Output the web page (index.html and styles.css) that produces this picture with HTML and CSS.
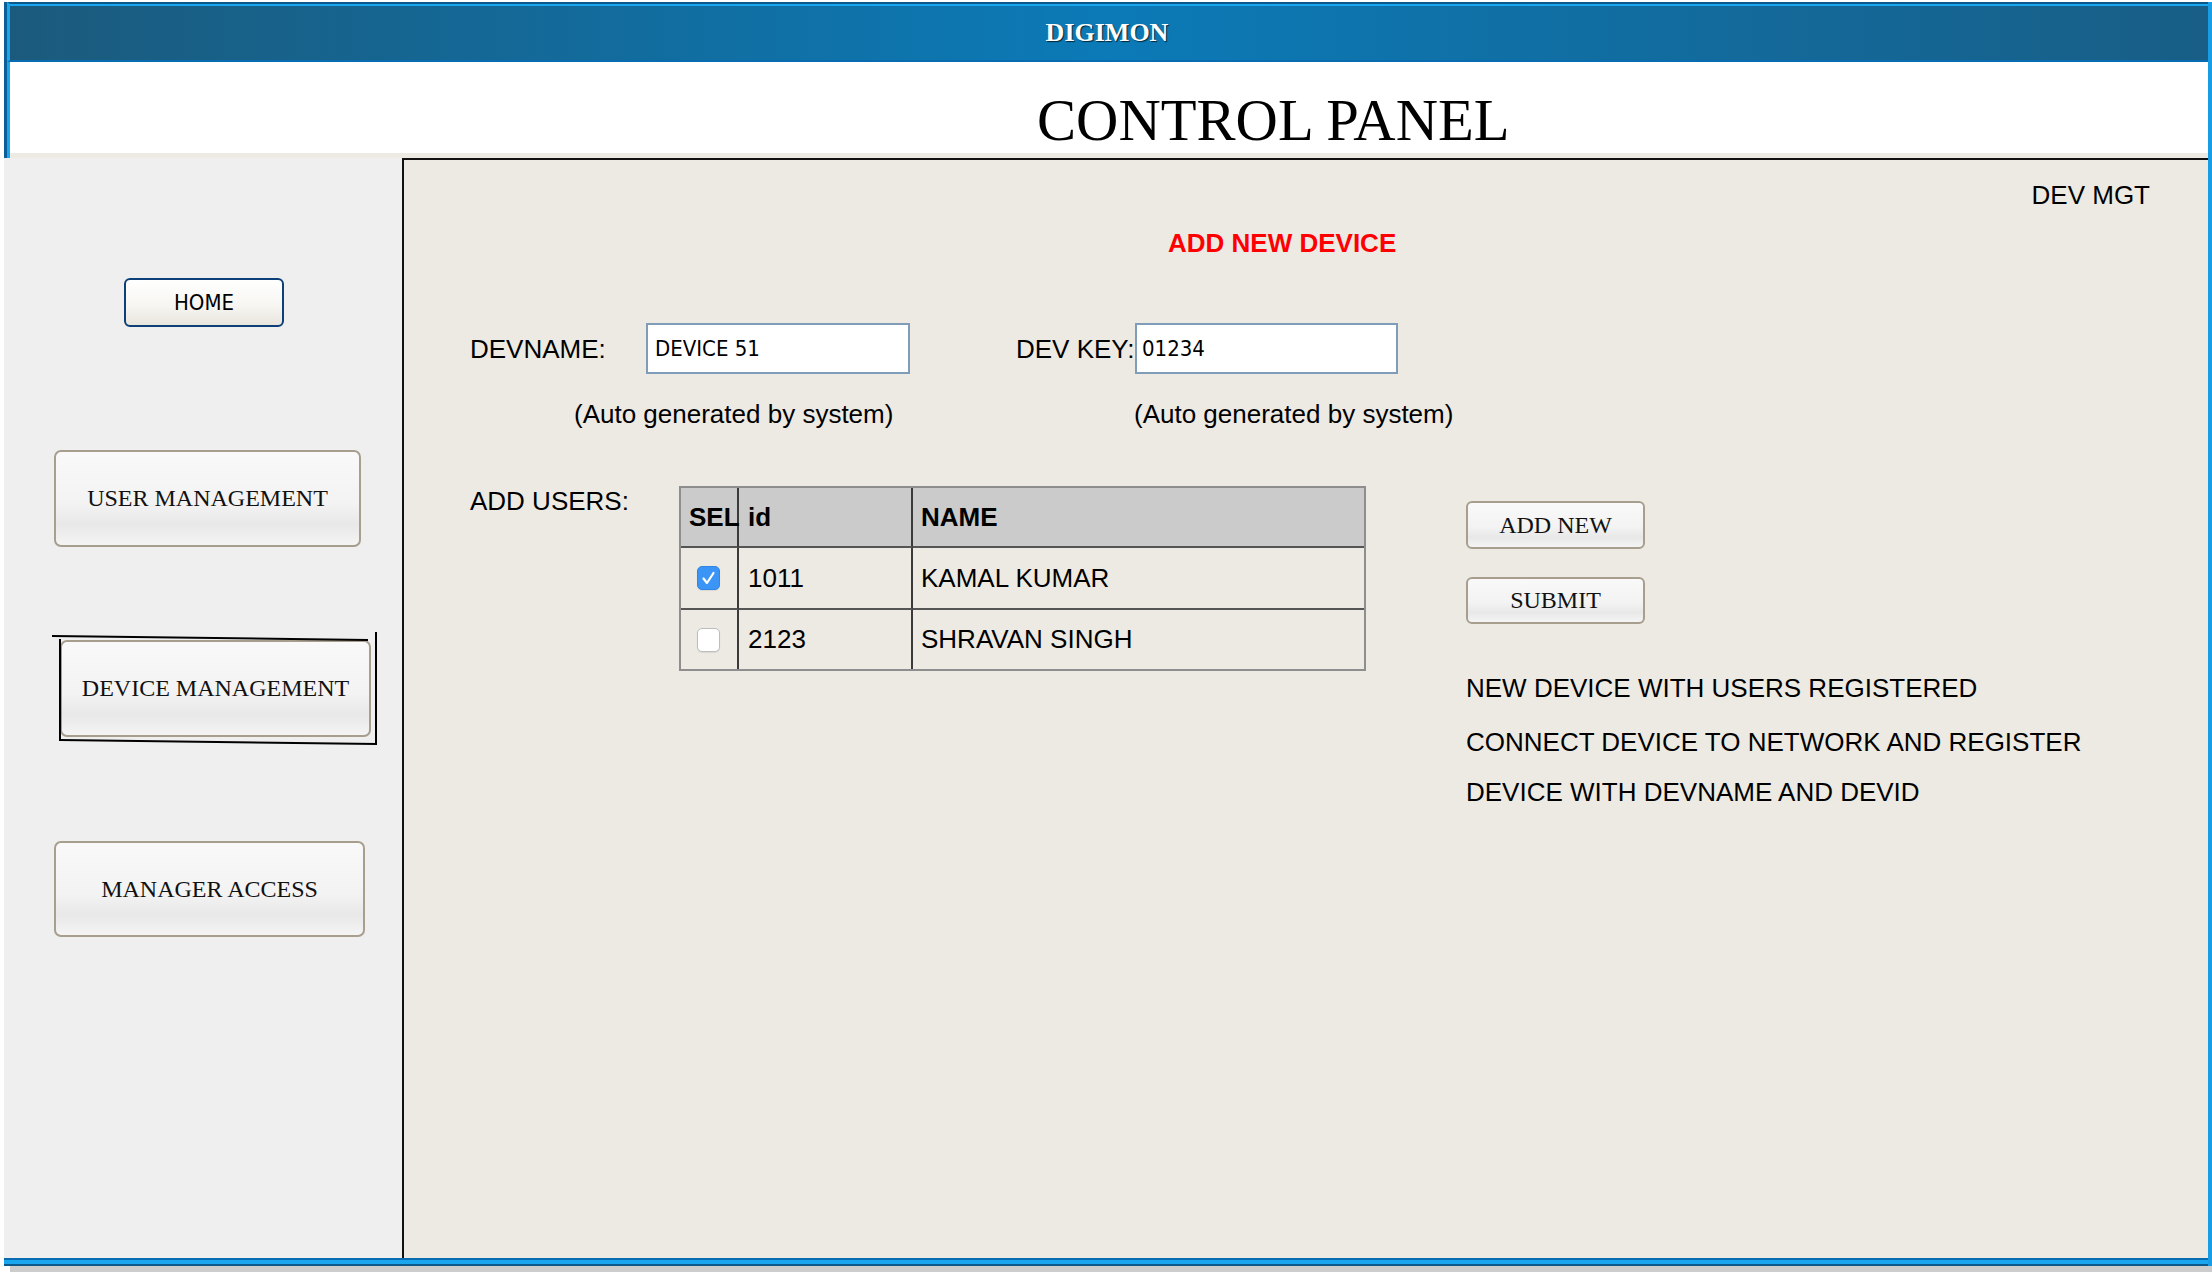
FILE: index.html
```html
<!DOCTYPE html>
<html lang="en">
<head>
<meta charset="utf-8">
<title>DIGIMON - Control Panel</title>
<link rel="stylesheet" href="styles.css">
</head>
<body>
<div class="window">
  <div class="topwrap">
    <header class="topbar"><span class="brand">DIGIMON</span></header>
    <div class="titlebox">
      <h1 class="title">CONTROL PANEL</h1>
      <div class="strip"></div>
    </div>
  </div>
  <div class="main">
    <aside class="sidebar">
      <button class="homebtn">HOME</button>
      <button class="navbtn user">USER MANAGEMENT</button>
      <div class="selwrap">
        <button class="navbtn dev">DEVICE MANAGEMENT</button>
        <svg class="selmark" width="328" height="116" viewBox="0 0 328 116">
          <line x1="2" y1="6" x2="318" y2="10" />
          <line x1="326" y1="2" x2="326" y2="114" />
          <line x1="10" y1="110" x2="327" y2="114" />
          <line x1="10" y1="9" x2="10" y2="111" />
        </svg>
      </div>
      <button class="navbtn mgr">MANAGER ACCESS</button>
    </aside>
    <section class="content">
      <div class="devmgt">DEV MGT</div>
      <div class="heading">ADD NEW DEVICE</div>
      <div class="fields">
        <label class="lbl name-lbl">DEVNAME:</label>
        <input class="field" type="text" value="DEVICE 51" readonly>
        <label class="lbl key-lbl">DEV KEY:</label>
        <input class="field key" type="text" value="01234" readonly>
      </div>
      <div class="autos">
        <span class="auto first">(Auto generated by system)</span>
        <span class="auto">(Auto generated by system)</span>
      </div>
      <div class="lower">
        <div class="addusers">ADD USERS:</div>
        <table class="users">
          <colgroup>
            <col class="c-sel">
            <col class="c-id">
            <col class="c-name">
          </colgroup>
          <thead>
            <tr><th class="sel">SEL</th><th class="id">id</th><th class="name">NAME</th></tr>
          </thead>
          <tbody>
            <tr class="r1">
              <td class="sel"><span class="cb checked"><svg width="23" height="24" viewBox="0 0 23 24"><path d="M6.5 12.5 L10 17 L16.5 7" /></svg></span></td>
              <td class="id">1011</td>
              <td class="name">KAMAL KUMAR</td>
            </tr>
            <tr class="r2">
              <td class="sel"><span class="cb"></span></td>
              <td class="id">2123</td>
              <td class="name">SHRAVAN SINGH</td>
            </tr>
          </tbody>
        </table>
        <div class="actions">
          <button class="actbtn">ADD NEW</button>
          <button class="actbtn submit">SUBMIT</button>
          <p class="msg m1">NEW DEVICE WITH USERS REGISTERED</p>
          <p class="msg m2">CONNECT DEVICE TO NETWORK AND REGISTER</p>
          <p class="msg m3">DEVICE WITH DEVNAME AND DEVID</p>
        </div>
      </div>
    </section>
  </div>
  <div class="bottom"></div>
</div>
<div class="shadow"></div>
</body>
</html>
```
FILE: styles.css
```css
* { box-sizing: border-box; }
html, body { margin: 0; padding: 0; background: #ffffff; }
body {
  width: 2212px;
  height: 1272px;
  overflow: hidden;
  font-family: "Liberation Sans", Arial, sans-serif;
  color: #000;
}
.window {
  margin: 2px 0 0 4px;
  width: 2208px;
  border-right: 4px solid #169de6;
}
.topwrap { border-left: 3px solid #0b5f96; }
.topbar {
  height: 60px;
  border-left: 3px solid #1aa6ee;
  border-top: 2px solid #0b598a;
  border-bottom: 2px solid #0a6cb0;
  box-shadow: inset 0 2px 0 #1aa6ee;
  background: linear-gradient(to right, #1b5a7c 0%, #0b7ab7 50%, #185e86 100%);
  display: flex;
  align-items: center;
  justify-content: center;
  padding-right: 4px;
}
.brand {
  font-family: "Liberation Serif", "Times New Roman", serif;
  font-weight: bold;
  font-size: 26px;
  color: #ffffff;
  text-shadow: 1px 1px 1px rgba(0, 0, 0, 0.7);
  margin-top: 2px;
}
.titlebox {
  height: 96px;
  border-left: 3px solid #1aa6ee;
  background: #ffffff;
  display: flex;
  flex-direction: column;
}
.title {
  margin: 0;
  height: 91px;
  padding: 30px 0 0 1027px;
  font-family: "Liberation Serif", "Times New Roman", serif;
  font-weight: normal;
  font-size: 58.6px;
  line-height: 57px;
  color: #000;
}
.strip { height: 5px; background: #edeae3; }

.main { display: flex; height: 1100px; }
.sidebar {
  flex: none;
  width: 398px;
  background: #efefef;
  display: flex;
  flex-direction: column;
  align-items: flex-start;
  padding-top: 120px;
}
.homebtn {
  margin-left: 120px;
  width: 160px;
  height: 49px;
  border: 2px solid #0d3f78;
  border-radius: 6px;
  background: linear-gradient(to bottom, #ffffff 0%, #f7f6f2 55%, #e9e6de 100%);
  font-family: "DejaVu Sans", Verdana, sans-serif;
  font-stretch: condensed;
  font-size: 22px;
  color: #000;
  padding: 0;
}
.navbtn, .actbtn {
  border: 2px solid #a79e8e;
  border-radius: 7px;
  background: linear-gradient(to bottom, #f9f9f9 0%, #f3f3f3 55%, #e8e8e8 78%, #f4f4f4 100%);
  font-family: "Liberation Serif", "Times New Roman", serif;
  font-size: 24px;
  color: #111;
  padding: 0;
}
.navbtn { height: 97px; }
.navbtn.user { margin: 123px 0 0 50px; width: 307px; }
.selwrap {
  position: relative;
  margin: 83px 0 0 46px;
  width: 328px;
  height: 116px;
  padding: 10px 0 0 10px;
}
.navbtn.dev { width: 311px; }
.selmark { position: absolute; left: 0; top: 0; pointer-events: none; }
.selmark line { stroke: #000; stroke-width: 2; }
.navbtn.mgr { margin: 95px 0 0 50px; width: 311px; height: 96px; }

.content {
  flex: 1;
  background: #edeae3;
  border-top: 2px solid #111;
  border-left: 2px solid #111;
  padding: 22px 58px 0 66px;
}
.devmgt {
  text-align: right;
  font-size: 26px;
  line-height: 26px;
}
.heading {
  margin: 22px 0 0 698px;
  color: #ff0000;
  font-weight: bold;
  font-size: 26px;
  line-height: 26px;
}
.fields {
  margin-top: 67px;
  display: flex;
  align-items: center;
  height: 51px;
}
.lbl { font-size: 26px; line-height: 26px; }
.name-lbl { width: 176px; }
.key-lbl { width: 119px; margin-left: 106px; white-space: nowrap; }
.field {
  width: 264px;
  height: 51px;
  margin: 0;
  border: 2px solid #7f9db9;
  background: #ffffff;
  padding: 0 0 0 7px;
  font-family: "DejaVu Sans", Verdana, sans-serif;
  font-stretch: condensed;
  font-size: 22px;
  color: #000;
  outline: none;
}
.field.key { width: 263px; padding-left: 5px; }
.autos {
  margin: 27px 0 0 104px;
  display: flex;
  font-size: 26px;
  line-height: 26px;
}
.auto.first { width: 560px; }

.lower { margin-top: 59px; display: flex; align-items: flex-start; }
.addusers {
  width: 209px;
  padding-top: 2px;
  font-size: 26px;
  line-height: 26px;
}
.users {
  width: 687px;
  table-layout: fixed;
  border-collapse: separate;
  border-spacing: 0;
  border: 2px solid #8e8e8e;
  font-size: 26px;
}
.c-sel { width: 58px; }
.c-id { width: 174px; }
.c-name { width: 451px; }
.users th, .users td {
  padding: 0 0 0 9px;
  text-align: left;
  vertical-align: middle;
  white-space: nowrap;
  overflow: visible;
}
.users th {
  height: 60px;
  background: #cbcbcb;
  font-weight: bold;
  border-bottom: 2px solid #555;
}
.users tr.r1 td { height: 62px; border-bottom: 2px solid #555; }
.users tr.r2 td { height: 59px; }
.users .sel, .users .id { border-right: 2px solid #3a3a3a; }
.users th.sel { padding-left: 8px; }
.users td.sel { padding-left: 16px; }
.users th.name, .users td.name { padding-left: 8px; }
.cb {
  display: block;
  width: 23px;
  height: 24px;
  border-radius: 5px;
  background: #ffffff;
  border: 1px solid #bdbdbd;
  box-shadow: 0 1px 1px rgba(0, 0, 0, 0.08);
}
.cb.checked { background: #3b95f6; border-color: #2f86e6; }
.cb svg { display: block; margin: -1px 0 0 -1px; }
.cb svg path { fill: none; stroke: #ffffff; stroke-width: 2.2; stroke-linecap: round; stroke-linejoin: round; }

.actions {
  margin: 15px 0 0 100px;
  display: flex;
  flex-direction: column;
  align-items: flex-start;
}
.actbtn { width: 179px; height: 48px; border-radius: 6px; }
.actbtn.submit { margin-top: 28px; height: 47px; }
.msg { margin: 0; font-size: 26px; line-height: 26px; white-space: nowrap; }
.m1 { margin-top: 51px; }
.m2 { margin-top: 28px; }
.m3 { margin-top: 24px; }

.bottom {
  height: 8px;
  border-top: 2px solid #0a6cb0;
  border-bottom: 2px solid #0b598a;
  background: #1aa6ee;
}
.shadow {
  margin-left: 10px;
  width: 2202px;
  height: 6px;
  background: #cccccc;
}
```
